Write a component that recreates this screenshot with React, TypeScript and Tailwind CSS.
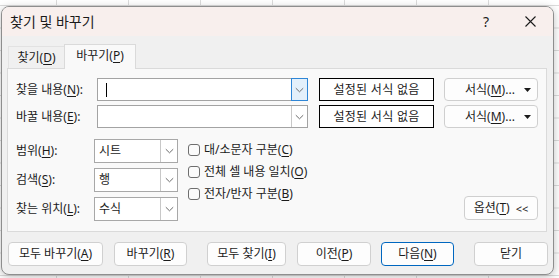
import React from "react";

const FONT = "font-['Noto_Sans','Noto_Sans_CJK_KR',sans-serif]";

function Chevron() {
  return (
    <svg width="9" height="6" viewBox="0 0 9 6" className="block">
      <path d="M0.8 1.2 L4.5 4.8 L8.2 1.2" fill="none" stroke="#6b6b6b" strokeWidth="1" />
    </svg>
  );
}

function Mn({ k }: { k: string }) {
  return (
    <span>
      (<u className="underline-offset-[2px]">{k}</u>)
    </span>
  );
}

function Combo({ focused, caret }: { focused?: boolean; caret?: boolean }) {
  return (
    <div className="flex h-[23px] w-[211px] border border-[#a3a3a3] bg-white">
      <div className="flex flex-1 items-center pl-[8px]">
        {caret && <div className="h-[14px] w-px bg-black" />}
      </div>
      {focused ? (
        <div className="-my-px -mr-px flex w-[17px] items-center justify-center border border-[#2f86d6] bg-[#e3f0fb]">
          <Chevron />
        </div>
      ) : (
        <div className="flex w-[16px] items-center justify-center border-l border-[#c8c8c8]">
          <Chevron />
        </div>
      )}
    </div>
  );
}

function NoFormat() {
  return (
    <div className="ml-[11px] flex h-[23px] w-[115px] items-center justify-center border border-black bg-white tracking-[0.3px]">
      설정된 서식 없음
    </div>
  );
}

function FormatBtn() {
  return (
    <div className="ml-[10px] flex h-[23px] w-[94px] items-center rounded-[4px] border border-[#cfcfcf] bg-[#fdfdfd] pl-[20px] pr-[6px]">
      <span>
        서식<Mn k="M" />...
      </span>
      <svg width="7" height="4" viewBox="0 0 7 4" className="ml-auto block">
        <path d="M0 0 H7 L3.5 4 Z" fill="#1b1b1b" />
      </svg>
    </div>
  );
}

function Select({ value }: { value: string }) {
  return (
    <div className="flex h-[24px] w-[84px] border border-[#a8a8a8] bg-white">
      <div className="flex flex-1 items-center pl-[4px]">{value}</div>
      <div className="flex w-[17px] items-center justify-center border-l border-[#c8c8c8]">
        <Chevron />
      </div>
    </div>
  );
}

function Check({ children }: { children: React.ReactNode }) {
  return (
    <div className="flex h-[22px] items-center">
      <div className="h-[12px] w-[12px] rounded-[3px] border border-[#6e6e6e] bg-[#fbfbfb]" />
      <span className="ml-[4px]">{children}</span>
    </div>
  );
}

function Btn({ children, w, primary }: { children: React.ReactNode; w: string; primary?: boolean }) {
  return (
    <div
      className={
        "flex h-[24px] items-center justify-center rounded-[4px] border bg-[#fdfdfd] " +
        w +
        (primary ? " border-[#0067c0]" : " border-[#d0d0d0]")
      }
    >
      {children}
    </div>
  );
}

export default function App() {
  return (
    <div
      className={
        "h-[278px] w-[559px] overflow-hidden bg-white bg-[linear-gradient(to_right,#dcdcdc_1px,transparent_1px),linear-gradient(to_bottom,#dcdcdc_1px,transparent_1px)] bg-[size:72px_22.5px] bg-[position:56px_5px] pl-[1px] pt-[6px] text-[12px] leading-none text-[#1b1b1b] " +
        FONT
      }
    >
      <div className="flex h-[269px] w-[553px] flex-col overflow-hidden rounded-lg border border-[#8e8e8e] bg-[#f0f0f0] shadow-[0_2px_8px_rgba(0,0,0,0.25)]">
        {/* Title bar */}
        <div className="flex h-[29px] shrink-0 items-center bg-[#f8efed] pl-[8px]">
          <span className="text-[14px]">찾기 및 바꾸기</span>
          <div className="ml-auto flex h-full w-[42px] items-center justify-center text-[14px]">?</div>
          <div className="flex h-full w-[46px] items-center justify-center">
            <svg width="11" height="11" viewBox="0 0 11 11" className="block">
              <path d="M0.5 0.5 L10.5 10.5 M10.5 0.5 L0.5 10.5" stroke="#1b1b1b" strokeWidth="1.1" />
            </svg>
          </div>
        </div>

        {/* Tabs */}
        <div className="flex h-[32px] shrink-0 items-end pl-[6px]">
          <div className="flex h-[22px] w-[56px] items-center justify-center border-l border-t border-[#e2e2e2]">
            찾기<Mn k="D" />
          </div>
          <div className="relative z-10 -mb-px flex h-[25px] w-[72px] items-start justify-center border-x border-t border-[#dadada] bg-[#f9f9f9] pt-[5px]">
            바꾸기<Mn k="P" />
          </div>
        </div>

        {/* Panel */}
        <div className="ml-[5px] flex h-[164px] w-[540px] shrink-0 flex-col border border-[#dadada] bg-[#f9f9f9] pl-[8px] pr-[8px] pt-[9px]">
          <div className="flex items-center">
            <div className="w-[81px]">
              찾을 내용<Mn k="N" />:
            </div>
            <Combo focused caret />
            <NoFormat />
            <FormatBtn />
          </div>
          <div className="mt-[4px] flex items-center">
            <div className="w-[81px]">
              바꿀 내용<Mn k="E" />:
            </div>
            <Combo />
            <NoFormat />
            <FormatBtn />
          </div>

          <div className="mt-[11px] flex">
            <div className="flex flex-col gap-[5px]">
              <div className="flex items-center">
                <div className="w-[78px]">
                  범위<Mn k="H" />:
                </div>
                <Select value="시트" />
              </div>
              <div className="flex items-center">
                <div className="w-[78px]">
                  검색<Mn k="S" />:
                </div>
                <Select value="행" />
              </div>
              <div className="flex items-center">
                <div className="w-[78px]">
                  찾는 위치<Mn k="L" />:
                </div>
                <Select value="수식" />
              </div>
            </div>
            <div className="ml-[10px] flex flex-col">
              <Check>
                대/소문자 구분<Mn k="C" />
              </Check>
              <Check>
                전체 셀 내용 일치<Mn k="O" />
              </Check>
              <Check>
                전자/반자 구분<Mn k="B" />
              </Check>
            </div>
            <div className="mb-px ml-auto flex h-[24px] w-[74px] items-center justify-center self-end rounded-[4px] border border-[#cfcfcf] bg-[#fdfdfd]">
              옵션<Mn k="T" />
              <span className="ml-[6px] text-[11px]">&lt;&lt;</span>
            </div>
          </div>
        </div>

        {/* Bottom buttons */}
        <div className="mt-[10px] flex pl-[6px]">
          <Btn w="w-[95px]">
            모두 바꾸기<Mn k="A" />
          </Btn>
          <div className="w-[11px]" />
          <Btn w="w-[73px]">
            바꾸기<Mn k="R" />
          </Btn>
          <div className="w-[20px]" />
          <Btn w="w-[79px]">
            모두 찾기<Mn k="I" />
          </Btn>
          <div className="w-[11px]" />
          <Btn w="w-[74px]">
            이전<Mn k="P" />
          </Btn>
          <div className="w-[10px]" />
          <Btn w="w-[73px]" primary>
            다음<Mn k="N" />
          </Btn>
          <div className="w-[20px]" />
          <Btn w="w-[74px]">닫기</Btn>
        </div>
      </div>
    </div>
  );
}
